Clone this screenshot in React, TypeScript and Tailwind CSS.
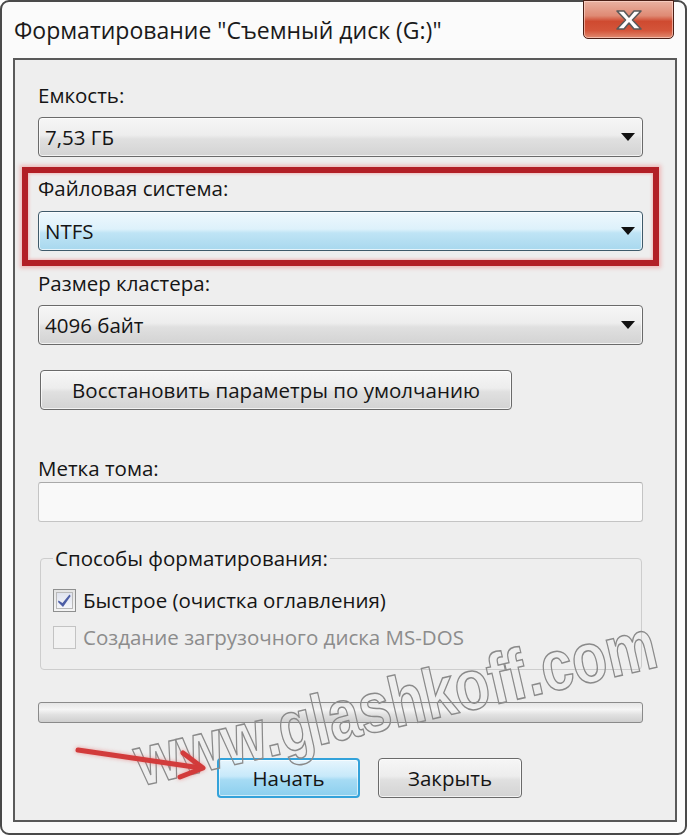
import React from "react";

function DropArrow() {
  return (
    <svg width="14" height="8" viewBox="0 0 14 8">
      <path d="M0 0h14L7 8z" fill="#111" />
    </svg>
  );
}

function Combo({ value, active }: { value: string; active?: boolean }) {
  return (
    <div
      className={`flex h-[40px] w-[605px] items-center justify-between rounded-[4px] border pl-[6px] pr-[7px] shadow-[inset_0_0_0_1px_rgba(255,255,255,0.7)] ${
        active
          ? "border-[#3f5a6a] bg-[linear-gradient(#eef8fd,#ddf1fb_45%,#bfe4f5_55%,#a8d8ee)]"
          : "border-[#6a6a6a] bg-[linear-gradient(#f6f6f6,#ededed_45%,#e0e0e0_55%,#d3d3d3)]"
      }`}
    >
      <span>{value}</span>
      <DropArrow />
    </div>
  );
}

function Label({ children, className = "" }: { children: React.ReactNode; className?: string }) {
  return <div className={`h-[26px] leading-[26px] ${className}`}>{children}</div>;
}

export default function App() {
  return (
    <div className="relative h-[836px] w-[690px] overflow-hidden bg-white font-['Open_Sans','Noto_Sans',sans-serif] text-[20.5px] text-[#151515]">
      <div className="flex h-[835px] w-[687px] flex-col rounded-[9px] border-2 border-[#4a4a4a] bg-[#fbfbfb]">
        {/* title bar */}
        <div className="flex h-[56px] items-start justify-between">
          <div className="pl-[12px] pt-[13px] text-[23px] leading-[30px] text-[#1a1a1a]">
            Форматирование "Съемный диск (G:)"
          </div>
          <div className="mr-[11px] mt-[-2px] flex h-[39px] w-[91px] items-center justify-center rounded-b-[5px] border border-[#4b1f16] bg-[linear-gradient(#eab2a2,#df8a74_40%,#cf4a30_55%,#d4553a_80%,#e08a70)] shadow-[inset_0_0_0_1px_rgba(255,220,210,0.6)]">
            <svg width="30" height="22" viewBox="0 0 30 22">
              <path
                d="M3 2h7l5 6 5-6h7l-8.5 9L27 20h-7l-5-6-5 6H3l8.5-9z"
                fill="#fff"
                stroke="#5a5a5a"
                strokeWidth="1.6"
                strokeLinejoin="round"
              />
            </svg>
          </div>
        </div>

        {/* content panel */}
        <div className="ml-[11px] flex h-[764px] w-[664px] flex-col border-2 border-[#5a5a5a] bg-[#eeeeee] pl-[23px]">
          <Label className="mt-[22px]">Емкость:</Label>
          <div className="mt-[9px]">
            <Combo value="7,53 ГБ" />
          </div>

          <div className="-ml-[16px] mt-[10px] w-[637px] border-[6px] border-[#b21f26] px-[10px] pb-[9px] pt-[2px] shadow-[0_0_4px_2px_rgba(240,120,120,0.45),inset_0_0_3px_1px_rgba(240,120,120,0.45)]">
            <Label>Файловая система:</Label>
            <div className="mt-[10px]">
              <Combo value="NTFS" active />
            </div>
          </div>

          <Label className="mt-[4px]">Размер кластера:</Label>
          <div className="mt-[9px]">
            <Combo value="4096 байт" />
          </div>

          <button className="ml-[2px] mt-[25px] h-[40px] w-[472px] rounded-[4px] border border-[#6a6a6a] bg-[linear-gradient(#f6f6f6,#ededed_45%,#e0e0e0_55%,#d3d3d3)] text-center shadow-[inset_0_0_0_1px_rgba(255,255,255,0.7)]">
            Восстановить параметры по умолчанию
          </button>

          <Label className="mt-[45px]">Метка тома:</Label>
          <div className="mt-[1px] h-[40px] w-[605px] rounded-[3px] border border-[#c4c4c4] border-t-[#a9a9a9] bg-[#f9f9f9]" />

          <fieldset className="ml-[2px] mt-[23px] w-[602px] rounded-[4px] border border-[#cdcdcd] pb-[19px] pl-[12px]">
            <legend className="h-[26px] px-[2px] leading-[26px]">Способы форматирования:</legend>
            <div className="mt-[16px] flex h-[26px] items-center gap-[7px]">
              <div className="flex h-[23px] w-[23px] items-center justify-center border border-[#8e8f8f] bg-[linear-gradient(#e4e4e4,#f4f4f4)] p-[2px]">
                <div className="flex h-full w-full items-center justify-center border border-[#b9b9b9] bg-[linear-gradient(#dfe3ee,#f5f6fa)]">
                  <svg width="15" height="15" viewBox="0 0 15 15">
                    <path d="M1.5 7.5l4 2.5L12.5 1.5l1.2 1.5L6 14 1 9z" fill="#4d5ea6" />
                  </svg>
                </div>
              </div>
              <span className="leading-[26px]">Быстрое (очистка оглавления)</span>
            </div>
            <div className="mt-[11px] flex h-[26px] items-center gap-[7px]">
              <div className="h-[23px] w-[23px] border border-[#c3c3c3] bg-[#f2f2f2]" />
              <span className="leading-[26px] text-[#8c8c8c]">Создание загрузочного диска MS-DOS</span>
            </div>
          </fieldset>

          <div className="mt-[32px] h-[21px] w-[605px] rounded-[3px] border border-[#8a8a8a] bg-[linear-gradient(#e6e6e6,#f5f5f5_35%,#e2e2e2_60%,#cfcfcf)]" />

          <div className="ml-[179px] mt-[35px] flex gap-[18px]">
            <button className="h-[40px] w-[143px] rounded-[4px] border-2 border-[#33a2da] bg-[linear-gradient(#e6f5fd,#c7e9fa_45%,#a6dbf4_55%,#8ccfee)] text-center shadow-[inset_0_0_0_1px_rgba(255,255,255,0.6)]">
              Начать
            </button>
            <button className="h-[40px] w-[144px] rounded-[4px] border border-[#6a6a6a] bg-[linear-gradient(#f6f6f6,#ededed_45%,#e0e0e0_55%,#d3d3d3)] text-center shadow-[inset_0_0_0_1px_rgba(255,255,255,0.7)]">
              Закрыть
            </button>
          </div>
        </div>
      </div>

      {/* watermark */}
      <div className="pointer-events-none absolute left-[125px] top-[672px] w-[540px] rotate-[-13deg] scale-y-[1.25] text-center font-['Liberation_Sans',sans-serif] text-[57px] font-bold leading-[60px] text-transparent [-webkit-text-stroke:1.2px_#8a8a8a]">
        www.glashkoff.com
      </div>

      {/* red arrow */}
      <svg className="pointer-events-none absolute left-0 top-0" width="690" height="836">
        <g stroke="#d23b3b" strokeWidth="5" strokeLinecap="round" fill="none" style={{ filter: "drop-shadow(0 0 2px rgba(230,100,100,0.6))" }}>
          <path d="M78 750L201 768" />
          <path d="M183 753L203 768L180 777" strokeLinejoin="round" />
        </g>
      </svg>
    </div>
  );
}
